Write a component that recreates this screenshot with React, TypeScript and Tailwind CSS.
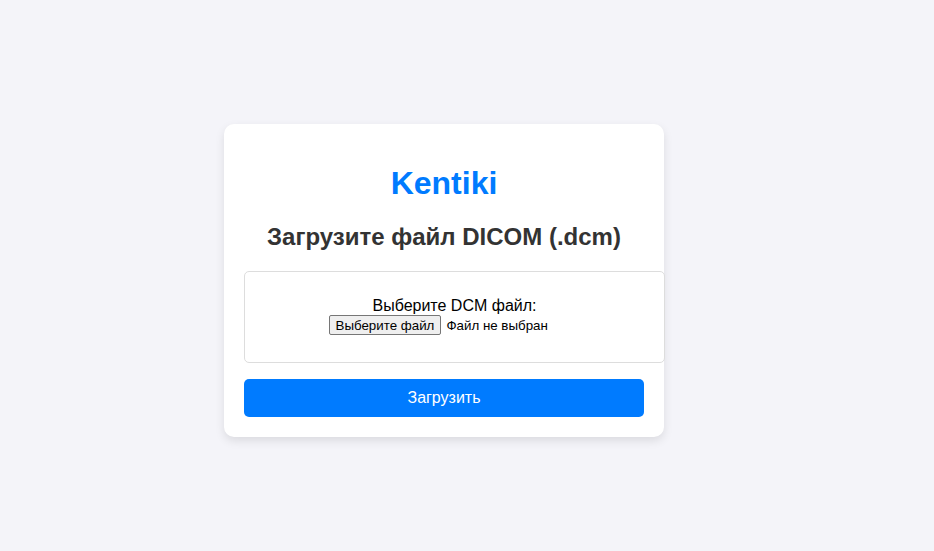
export default function App() {
  return (
    <div className="flex h-screen w-full items-center justify-center bg-[#f4f4f9] font-['Liberation_Sans',Arial,sans-serif]">
      <div className="mr-[46px] mt-[10px] w-[440px] rounded-[10px] bg-white p-5 text-center shadow-[0_4px_10px_rgba(0,0,0,0.1)]">
        <h1 className="my-[21px] text-[32px] font-bold leading-[37px] text-[#007bff]">Kentiki</h1>
        <h2 className="mb-5 text-[24px] font-bold leading-[28px] text-[#333]">Загрузите файл DICOM (.dcm)</h2>
        <form
          onSubmit={(e) => e.preventDefault()}
          className="flex flex-col items-stretch"
        >
          <div className="w-[421px] rounded-[5px] border border-[#ddd] pb-[27px] pt-[25px] text-black">
            <div className="text-[16px] leading-[18px]">Выберите DCM файл:</div>
            <div className="mx-auto flex h-[20px] w-[252px] items-center gap-[5px] text-[13.33px] leading-[15px]">
              <span className="flex h-[20px] items-center rounded-[2px] border border-[#767676] bg-[#efefef] px-[6px]">Выберите файл</span>
              <span>Файл не выбран</span>
            </div>
          </div>
          <button
            type="submit"
            className="mt-4 h-[38px] w-full rounded-[5px] bg-[#007bff] text-[16px] text-white"
          >
            Загрузить
          </button>
        </form>
      </div>
    </div>
  );
}
